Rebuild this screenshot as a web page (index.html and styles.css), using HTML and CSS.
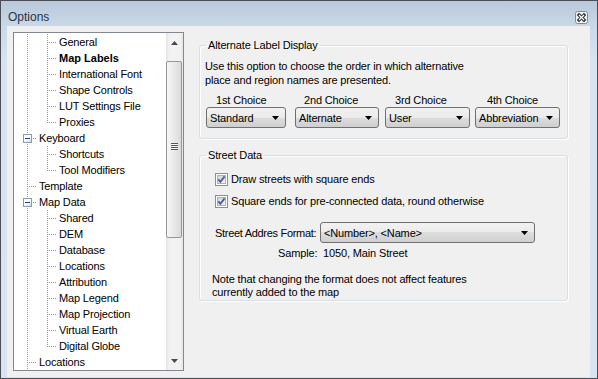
FILE: index.html
```html
<!DOCTYPE html>
<html>
<head>
<meta charset="utf-8">
<title>Options</title>
<link rel="stylesheet" href="styles.css">
</head>
<body>
<div class="window">
  <div class="titlebar">
    <span class="title">Options</span>
    <span class="close">
      <svg width="13" height="13" viewBox="0 0 13 13"><rect x="0.5" y="0.5" width="12" height="12" rx="2" fill="#eef2f7" stroke="#7b8aa0"/><path d="M4 4 L9 9 M9 4 L4 9" stroke="#333" stroke-width="3.2" stroke-linecap="square"/><path d="M4 4 L9 9 M9 4 L4 9" stroke="#fff" stroke-width="1.2"/></svg>
    </span>
  </div>
  <div class="client">
    <div class="tree">
      <div class="tree-items">
        <div class="row"><span class="c pipe"></span><span class="c tee"></span><span class="label">General</span></div>
        <div class="row"><span class="c pipe"></span><span class="c tee"></span><span class="label bold">Map Labels</span></div>
        <div class="row"><span class="c pipe"></span><span class="c tee"></span><span class="label">International Font</span></div>
        <div class="row"><span class="c pipe"></span><span class="c tee"></span><span class="label">Shape Controls</span></div>
        <div class="row"><span class="c pipe"></span><span class="c tee"></span><span class="label">LUT Settings File</span></div>
        <div class="row"><span class="c pipe"></span><span class="c elbow"></span><span class="label">Proxies</span></div>
        <div class="row"><span class="c tee"><span class="box"></span></span><span class="label">Keyboard</span></div>
        <div class="row"><span class="c pipe"></span><span class="c tee"></span><span class="label">Shortcuts</span></div>
        <div class="row"><span class="c pipe"></span><span class="c elbow"></span><span class="label">Tool Modifiers</span></div>
        <div class="row"><span class="c tee"></span><span class="label">Template</span></div>
        <div class="row"><span class="c tee"><span class="box"></span></span><span class="label">Map Data</span></div>
        <div class="row"><span class="c pipe"></span><span class="c tee"></span><span class="label">Shared</span></div>
        <div class="row"><span class="c pipe"></span><span class="c tee"></span><span class="label">DEM</span></div>
        <div class="row"><span class="c pipe"></span><span class="c tee"></span><span class="label">Database</span></div>
        <div class="row"><span class="c pipe"></span><span class="c tee"></span><span class="label">Locations</span></div>
        <div class="row"><span class="c pipe"></span><span class="c tee"></span><span class="label">Attribution</span></div>
        <div class="row"><span class="c pipe"></span><span class="c tee"></span><span class="label">Map Legend</span></div>
        <div class="row"><span class="c pipe"></span><span class="c tee"></span><span class="label">Map Projection</span></div>
        <div class="row"><span class="c pipe"></span><span class="c tee"></span><span class="label">Virtual Earth</span></div>
        <div class="row"><span class="c pipe"></span><span class="c elbow"></span><span class="label">Digital Globe</span></div>
        <div class="row"><span class="c tee"></span><span class="label">Locations</span></div>
      </div>
      <div class="vscroll">
        <div class="sb-btn sb-up"><svg width="7" height="4" viewBox="0 0 7 4"><path d="M3.5 0 L7 4 L0 4 Z" fill="#4a4a4a"/></svg></div>
        <div class="sb-track">
          <div class="sb-thumb"><span class="grip"></span></div>
        </div>
        <div class="sb-btn sb-down"><svg width="7" height="4" viewBox="0 0 7 4"><path d="M0 0 L7 0 L3.5 4 Z" fill="#4a4a4a"/></svg></div>
      </div>
    </div>
    <div class="panel">
      <fieldset class="group g1">
        <legend>Alternate Label Display</legend>
        <p class="desc">Use this option to choose the order in which alternative<br>place and region names are presented.</p>
        <div class="choices">
          <div class="choice ch1"><div class="choice-label">1st Choice</div><div class="combo"><span class="combo-text">Standard</span><svg class="arrow" width="7" height="4" viewBox="0 0 7 4"><path d="M0 0 L7 0 L3.5 4 Z" fill="#000"/></svg></div></div>
          <div class="choice ch2"><div class="choice-label">2nd Choice</div><div class="combo"><span class="combo-text">Alternate</span><svg class="arrow" width="7" height="4" viewBox="0 0 7 4"><path d="M0 0 L7 0 L3.5 4 Z" fill="#000"/></svg></div></div>
          <div class="choice ch3"><div class="choice-label">3rd Choice</div><div class="combo"><span class="combo-text">User</span><svg class="arrow" width="7" height="4" viewBox="0 0 7 4"><path d="M0 0 L7 0 L3.5 4 Z" fill="#000"/></svg></div></div>
          <div class="choice ch4"><div class="choice-label">4th Choice</div><div class="combo"><span class="combo-text">Abbreviation</span><svg class="arrow" width="7" height="4" viewBox="0 0 7 4"><path d="M0 0 L7 0 L3.5 4 Z" fill="#000"/></svg></div></div>
        </div>
      </fieldset>
      <fieldset class="group g2">
        <legend>Street Data</legend>
        <div class="check first">
          <svg class="cb" width="13" height="13" viewBox="0 0 13 13"><defs><linearGradient id="cbg" x1="0" y1="0" x2="1" y2="1"><stop offset="0" stop-color="#cdd1d7"/><stop offset="1" stop-color="#f7f7f8"/></linearGradient></defs><rect x="0.5" y="0.5" width="12" height="12" fill="#fff" stroke="#8e8f8f"/><rect x="2.5" y="2.5" width="8" height="8" fill="url(#cbg)" stroke="#adb2b9"/><path d="M3.3 6.4 L5.4 8.8 L9.6 3.4" fill="none" stroke="#4a5f97" stroke-width="1.8"/></svg>
          <span>Draw streets with square ends</span>
        </div>
        <div class="check second">
          <svg class="cb" width="13" height="13" viewBox="0 0 13 13"><rect x="0.5" y="0.5" width="12" height="12" fill="#fff" stroke="#8e8f8f"/><rect x="2.5" y="2.5" width="8" height="8" fill="url(#cbg)" stroke="#adb2b9"/><path d="M3.3 6.4 L5.4 8.8 L9.6 3.4" fill="none" stroke="#4a5f97" stroke-width="1.8"/></svg>
          <span>Square ends for pre-connected data, round otherwise</span>
        </div>
        <div class="format-row">
          <span class="format-label">Street Addres Format:</span>
          <div class="combo wide"><span class="combo-text">&lt;Number&gt;, &lt;Name&gt;</span><svg class="arrow" width="7" height="4" viewBox="0 0 7 4"><path d="M0 0 L7 0 L3.5 4 Z" fill="#000"/></svg></div>
        </div>
        <div class="sample">Sample:&nbsp; 1050, Main Street</div>
        <p class="note">Note that changing the format does not affect features<br>currently added to the map</p>
      </fieldset>
    </div>
  </div>
</div>
</body>
</html>
```

FILE: styles.css
```css
* { box-sizing: border-box; }
html, body { margin: 0; padding: 0; }
body {
  width: 598px;
  height: 379px;
  overflow: hidden;
  font-family: "Liberation Sans", Arial, sans-serif;
  font-size: 11px;
  letter-spacing: -0.15px;
  color: #000;
  background: #d7e3f1;
}
.window {
  width: 598px;
  height: 379px;
  border: 1px solid #4a4f57;
  background: linear-gradient(#b9c9db 0, #cad8e7 25px, #d7e3f1 60px, #d8e4f1 100%);
  display: flex;
  flex-direction: column;
  padding: 0 7px 7px 6px;
}
.titlebar {
  height: 25px;
  flex: none;
  display: flex;
  align-items: flex-start;
}
.title {
  font-size: 12px;
  letter-spacing: 0;
  line-height: 14px;
  margin-top: 9px;
  margin-left: 1px;
  color: #2a3443;
}
.close {
  margin-left: auto;
  margin-top: 10px;
  margin-right: 2px;
  width: 13px;
  height: 13px;
  display: block;
}
.close svg { display: block; }

.client {
  flex: 1;
  background: #f0f0f0;
  display: flex;
  padding: 6px;
}

/* tree */
.tree {
  width: 171px;
  flex: none;
  border: 1px solid #828790;
  background: #fff;
  display: flex;
  overflow: hidden;
}
.tree-items {
  flex: 1;
  overflow: hidden;
  padding: 1px 0 0 3px;
}
.row {
  height: 16px;
  display: flex;
  align-items: center;
  white-space: nowrap;
}
.c {
  width: 20px;
  height: 16px;
  flex: none;
  display: flex;
  align-items: center;
}
.pipe {
  background: repeating-linear-gradient(to bottom, #999 0 1px, transparent 1px 2px) 10px 0 / 1px 16px no-repeat;
}
.tee {
  background:
    repeating-linear-gradient(to bottom, #999 0 1px, transparent 1px 2px) 10px 0 / 1px 16px no-repeat,
    repeating-linear-gradient(to right, #999 0 1px, transparent 1px 2px) 10px 8px / 9px 1px no-repeat;
}
.elbow {
  background:
    repeating-linear-gradient(to bottom, #999 0 1px, transparent 1px 2px) 10px 0 / 1px 9px no-repeat,
    repeating-linear-gradient(to right, #999 0 1px, transparent 1px 2px) 10px 8px / 9px 1px no-repeat;
}
.box {
  width: 9px;
  height: 9px;
  margin-left: 6px;
  margin-top: 1px;
  border: 1px solid #8c9aac;
  background:
    linear-gradient(#1f3f8f, #1f3f8f) 1px 3px / 5px 1px no-repeat,
    linear-gradient(135deg, #ffffff 45%, #d4dbe4);
}
.label {
  padding-left: 2px;
  line-height: 16px;
}
.bold { font-weight: bold; letter-spacing: 0; }

.vscroll {
  width: 17px;
  flex: none;
  display: flex;
  flex-direction: column;
  background: linear-gradient(to right, #e3e3e3 0, #f2f2f2 3px, #f2f2f2 14px, #e6e6e6 17px);
}
.sb-btn {
  height: 17px;
  flex: none;
  display: flex;
  justify-content: center;
}
.sb-btn svg { display: block; }
.sb-up { padding-top: 8px; }
.sb-down { padding-top: 6px; }
.sb-track {
  flex: 1;
  padding: 11px 1px 0 0;
}
.sb-thumb {
  height: 177px;
  border: 1px solid #979797;
  border-radius: 2px;
  background: linear-gradient(to right, #f6f6f6, #e9e9e9 50%, #dadada);
  display: flex;
  align-items: center;
  justify-content: center;
}
.grip {
  width: 7px;
  height: 7px;
  margin-top: -6px;
  background: repeating-linear-gradient(to bottom, #555 0 1px, #f6f6f6 1px 2px);
}

/* right panel */
.panel {
  flex: 1;
  padding-left: 15px;
  padding-top: 7px;
}
.group {
  width: 369px;
  margin: 0;
  border: 1px solid #d5dfe5;
  border-radius: 3px;
  box-shadow: 1px 1px 0 #fff, inset 1px 1px 0 #fff;
  padding: 0 5px;
}
.group legend {
  padding: 0 2px;
  margin-left: 1px;
  line-height: 13px;
}
.g1 { padding-bottom: 10px; }
.g2 { margin-top: 10px; padding-bottom: 1px; }
.desc {
  margin: 7px 0 0 0;
  line-height: 14px;
}
.choices {
  display: flex;
  margin-top: 6px;
}
.choice { flex: none; }
.choice-label { line-height: 14px; }
.ch1 { width: 80px; margin-left: 1px; }
.ch2 { width: 84px; margin-left: 9px; }
.ch3 { width: 85px; margin-left: 6px; }
.ch4 { width: 85px; margin-left: 5px; }
.ch1 .choice-label { padding-left: 10px; }
.ch2 .choice-label { padding-left: 9px; }
.ch3 .choice-label { padding-left: 10px; }
.ch4 .choice-label { padding-left: 12px; }
.combo {
  height: 21px;
  border: 1px solid #707070;
  border-radius: 3px;
  background: linear-gradient(#f2f2f2 0, #ebebeb 50%, #dddddd 50%, #cfcfcf 100%);
  display: flex;
  align-items: center;
  padding: 0 6px 0 3px;
}
.combo-text { flex: 1; white-space: nowrap; }
.arrow { display: block; flex: none; }

.check {
  height: 16px;
  display: flex;
  align-items: center;
  margin-left: 10px;
}
.check.first { margin-top: 9px; }
.check.second { margin-top: 6px; }
.cb { display: block; flex: none; margin-right: 3px; }
.format-row {
  display: flex;
  align-items: center;
  margin-top: 13px;
  margin-left: 10px;
}
.format-label { width: 105px; flex: none; white-space: nowrap; letter-spacing: -0.3px; }
.combo.wide { width: 215px; }
.sample {
  margin-top: 4px;
  margin-left: 73px;
  line-height: 13px;
}
.note {
  margin: 13px 0 0 7px;
  line-height: 13px;
}
```
